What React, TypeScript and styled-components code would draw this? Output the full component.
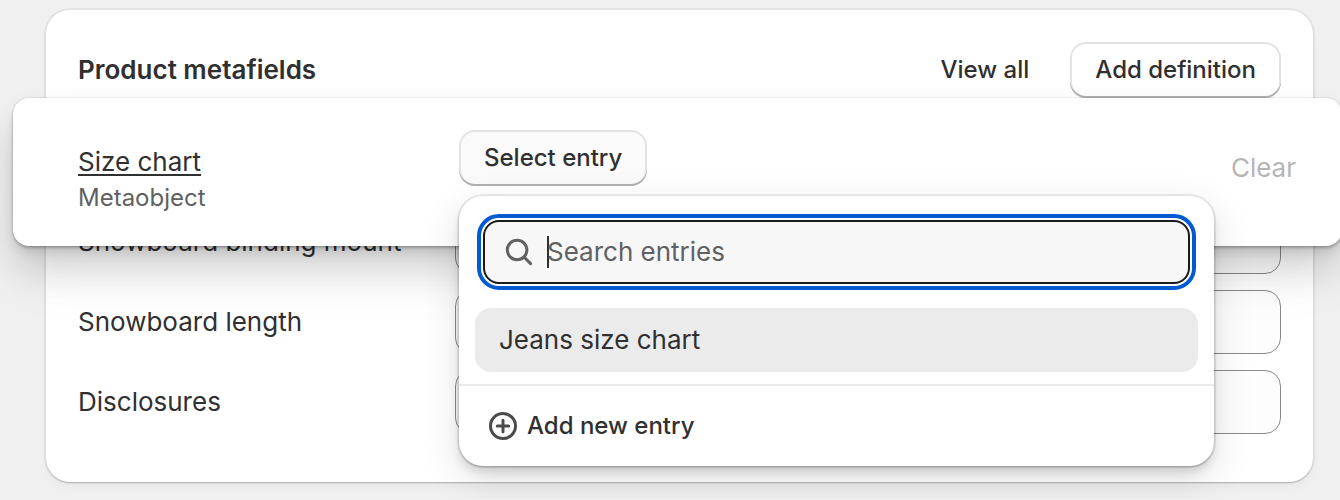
import React, { useState } from "react";
import styled, { createGlobalStyle, css } from "styled-components";

const GlobalStyle = createGlobalStyle`
  * { box-sizing: border-box; }
  body {
    margin: 0;
    background: #f0f0f0;
    color: #303030;
    font-family: Inter, "Liberation Sans", sans-serif;
    font-size: 26px;
    line-height: 32px;
    overflow-x: hidden;
  }
  button, input { font: inherit; color: inherit; }
`;

const Page = styled.main`
  padding: 10px 27px 17px 46px;
  overflow: hidden;
`;

const Card = styled.section`
  position: relative;
  padding: 32px 32px 48px;
  border-radius: 24px;
  background: #fff;
  box-shadow: 0 0 0 2px rgba(0, 0, 0, 0.05), 0 1px 1px rgba(0, 0, 0, 0.18),
    0 6px 10px rgba(0, 0, 0, 0.03);
`;

const CardHeader = styled.header`
  display: flex;
  align-items: center;
  gap: 16px;
  margin-bottom: 112px;
`;

const Title = styled.h2`
  flex: 1;
  margin: 0;
  font-size: 26px;
  font-weight: 600;
`;

const Button = styled.button<{ $plain?: boolean; $pressed?: boolean }>`
  height: 56px;
  padding: 0 25px;
  border: 0;
  border-radius: 16px;
  background: ${(p) => (p.$pressed ? "#fafafa" : "#fff")};
  font-size: 24px;
  font-weight: 500;
  white-space: nowrap;
  cursor: pointer;
  ${(p) =>
    !p.$plain &&
    css`
      box-shadow: inset 0 -2px 0 #b0b0b0, inset 0 0 0 2px #e3e3e3;
    `}
`;

const FieldList = styled.div`
  display: grid;
  gap: 16px;
`;

const FieldRow = styled.div`
  display: grid;
  grid-template-columns: 377px 1fr;
  align-items: center;
`;

const FieldInput = styled.input`
  width: 100%;
  height: 64px;
  padding: 0 24px;
  border: 1px solid #8a8a8a;
  border-radius: 16px;
  background: #fdfdfd;
`;

const ActiveRow = styled.div`
  position: absolute;
  top: 88px;
  left: -33px;
  right: -29px;
  display: grid;
  grid-template-columns: 381px 1fr auto;
  align-items: start;
  height: 148px;
  padding: 32px 46px 32px 65px;
  border-radius: 16px;
  background: #fff;
  box-shadow: 0 0 0 1px rgba(0, 0, 0, 0.06), 0 2px 3px rgba(0, 0, 0, 0.22),
    0 8px 12px -2px rgba(0, 0, 0, 0.1), 0 24px 40px -4px rgba(0, 0, 0, 0.16),
    0 32px 60px rgba(0, 0, 0, 0.05);
`;

const Definition = styled.div`
  display: grid;
  justify-items: start;
  gap: 4px;
  padding-top: 16px;
`;

const DefinitionLink = styled.a`
  color: inherit;
  text-decoration: underline;
  text-decoration-thickness: 2px;
  text-underline-offset: 3px;
`;

const DefinitionType = styled.span`
  color: #616161;
  font-size: 24px;
`;

const ClearButton = styled.button`
  margin-top: 22px;
  padding: 0;
  border: 0;
  background: none;
  &:disabled { color: #b5b5b5; }
`;

const Popover = styled.div`
  position: absolute;
  top: 98px;
  left: 446px;
  right: 128px;
  border-radius: 24px;
  background: #fff;
  box-shadow: 0 0 0 2px rgba(0, 0, 0, 0.07), 0 1px 2px rgba(0, 0, 0, 0.2),
    0 8px 12px -2px rgba(0, 0, 0, 0.14), 0 12px 40px rgba(0, 0, 0, 0.12);
`;

const SearchBox = styled.label`
  position: relative;
  display: flex;
  align-items: center;
  gap: 12px;
  height: 64px;
  margin: 24px;
  padding: 0 20px;
  border: 2px solid #1a1a1a;
  border-radius: 16px;
  outline: 4px solid #005bd3;
  outline-offset: 2px;
  background: #f7f7f7;
`;

const SearchInput = styled.input`
  flex: 1;
  min-width: 0;
  padding: 0;
  border: 0;
  outline: 0;
  background: none;
  caret-color: transparent;
  &::placeholder { color: #616161; opacity: 1; }
`;

const Caret = styled.span`
  position: absolute;
  left: 62px;
  top: 14px;
  width: 2px;
  height: 32px;
  background: #303030;
`;

const Options = styled.ul`
  margin: 0;
  padding: 0 16px 12px;
  list-style: none;
`;

const Option = styled.button`
  width: 100%;
  height: 64px;
  padding: 0 24px;
  border: 0;
  border-radius: 16px;
  background: #ebebeb;
  text-align: left;
`;

const Footer = styled.footer`
  padding: 24px 30px;
  border-top: 2px solid #ebebeb;
`;

const AddEntry = styled.button`
  display: flex;
  align-items: center;
  gap: 10px;
  height: 32px;
  padding: 0;
  border: 0;
  background: none;
  font-size: 24px;
  font-weight: 500;
`;

const SearchIcon = () => (
  <svg width="30" height="30" viewBox="0 0 30 30" fill="none" stroke="#616161" strokeWidth="3" strokeLinecap="round" aria-hidden="true">
    <circle cx="12.1" cy="13" r="9.8" />
    <path d="M19.2 20.2 L25.6 26.6" />
  </svg>
);

const PlusIcon = () => (
  <svg width="28" height="28" viewBox="0 0 28 28" fill="none" stroke="#4a4a4a" strokeWidth="3" strokeLinecap="round" aria-hidden="true">
    <circle cx="14" cy="14" r="12.5" />
    <path d="M14 8.3 V19.7 M8.3 14 H19.7" />
  </svg>
);

const fields = [
  { id: "binding-mount", label: "Snowboard binding mount" },
  { id: "length", label: "Snowboard length" },
  { id: "disclosures", label: "Disclosures" },
];

export default function App() {
  const [query, setQuery] = useState("");
  return (
    <>
      <GlobalStyle />
      <Page>
        <Card>
          <CardHeader>
            <Title>Product metafields</Title>
            <Button $plain>View all</Button>
            <Button>Add definition</Button>
          </CardHeader>
          <FieldList>
            {fields.map((f) => (
              <FieldRow key={f.id}>
                <label htmlFor={f.id}>{f.label}</label>
                <FieldInput id={f.id} />
              </FieldRow>
            ))}
          </FieldList>
          <ActiveRow>
            <Definition>
              <DefinitionLink href="#size-chart">Size chart</DefinitionLink>
              <DefinitionType>Metaobject</DefinitionType>
            </Definition>
            <div>
              <Button $pressed aria-expanded="true">Select entry</Button>
            </div>
            <ClearButton disabled>Clear</ClearButton>
            <Popover>
              <SearchBox>
                <SearchIcon />
                <SearchInput
                  aria-label="Search entries"
                  placeholder="Search entries"
                  value={query}
                  onChange={(e) => setQuery(e.target.value)}
                />
                {query === "" && <Caret />}
              </SearchBox>
              <Options>
                <li>
                  <Option>Jeans size chart</Option>
                </li>
              </Options>
              <Footer>
                <AddEntry>
                  <PlusIcon />
                  Add new entry
                </AddEntry>
              </Footer>
            </Popover>
          </ActiveRow>
        </Card>
      </Page>
    </>
  );
}
